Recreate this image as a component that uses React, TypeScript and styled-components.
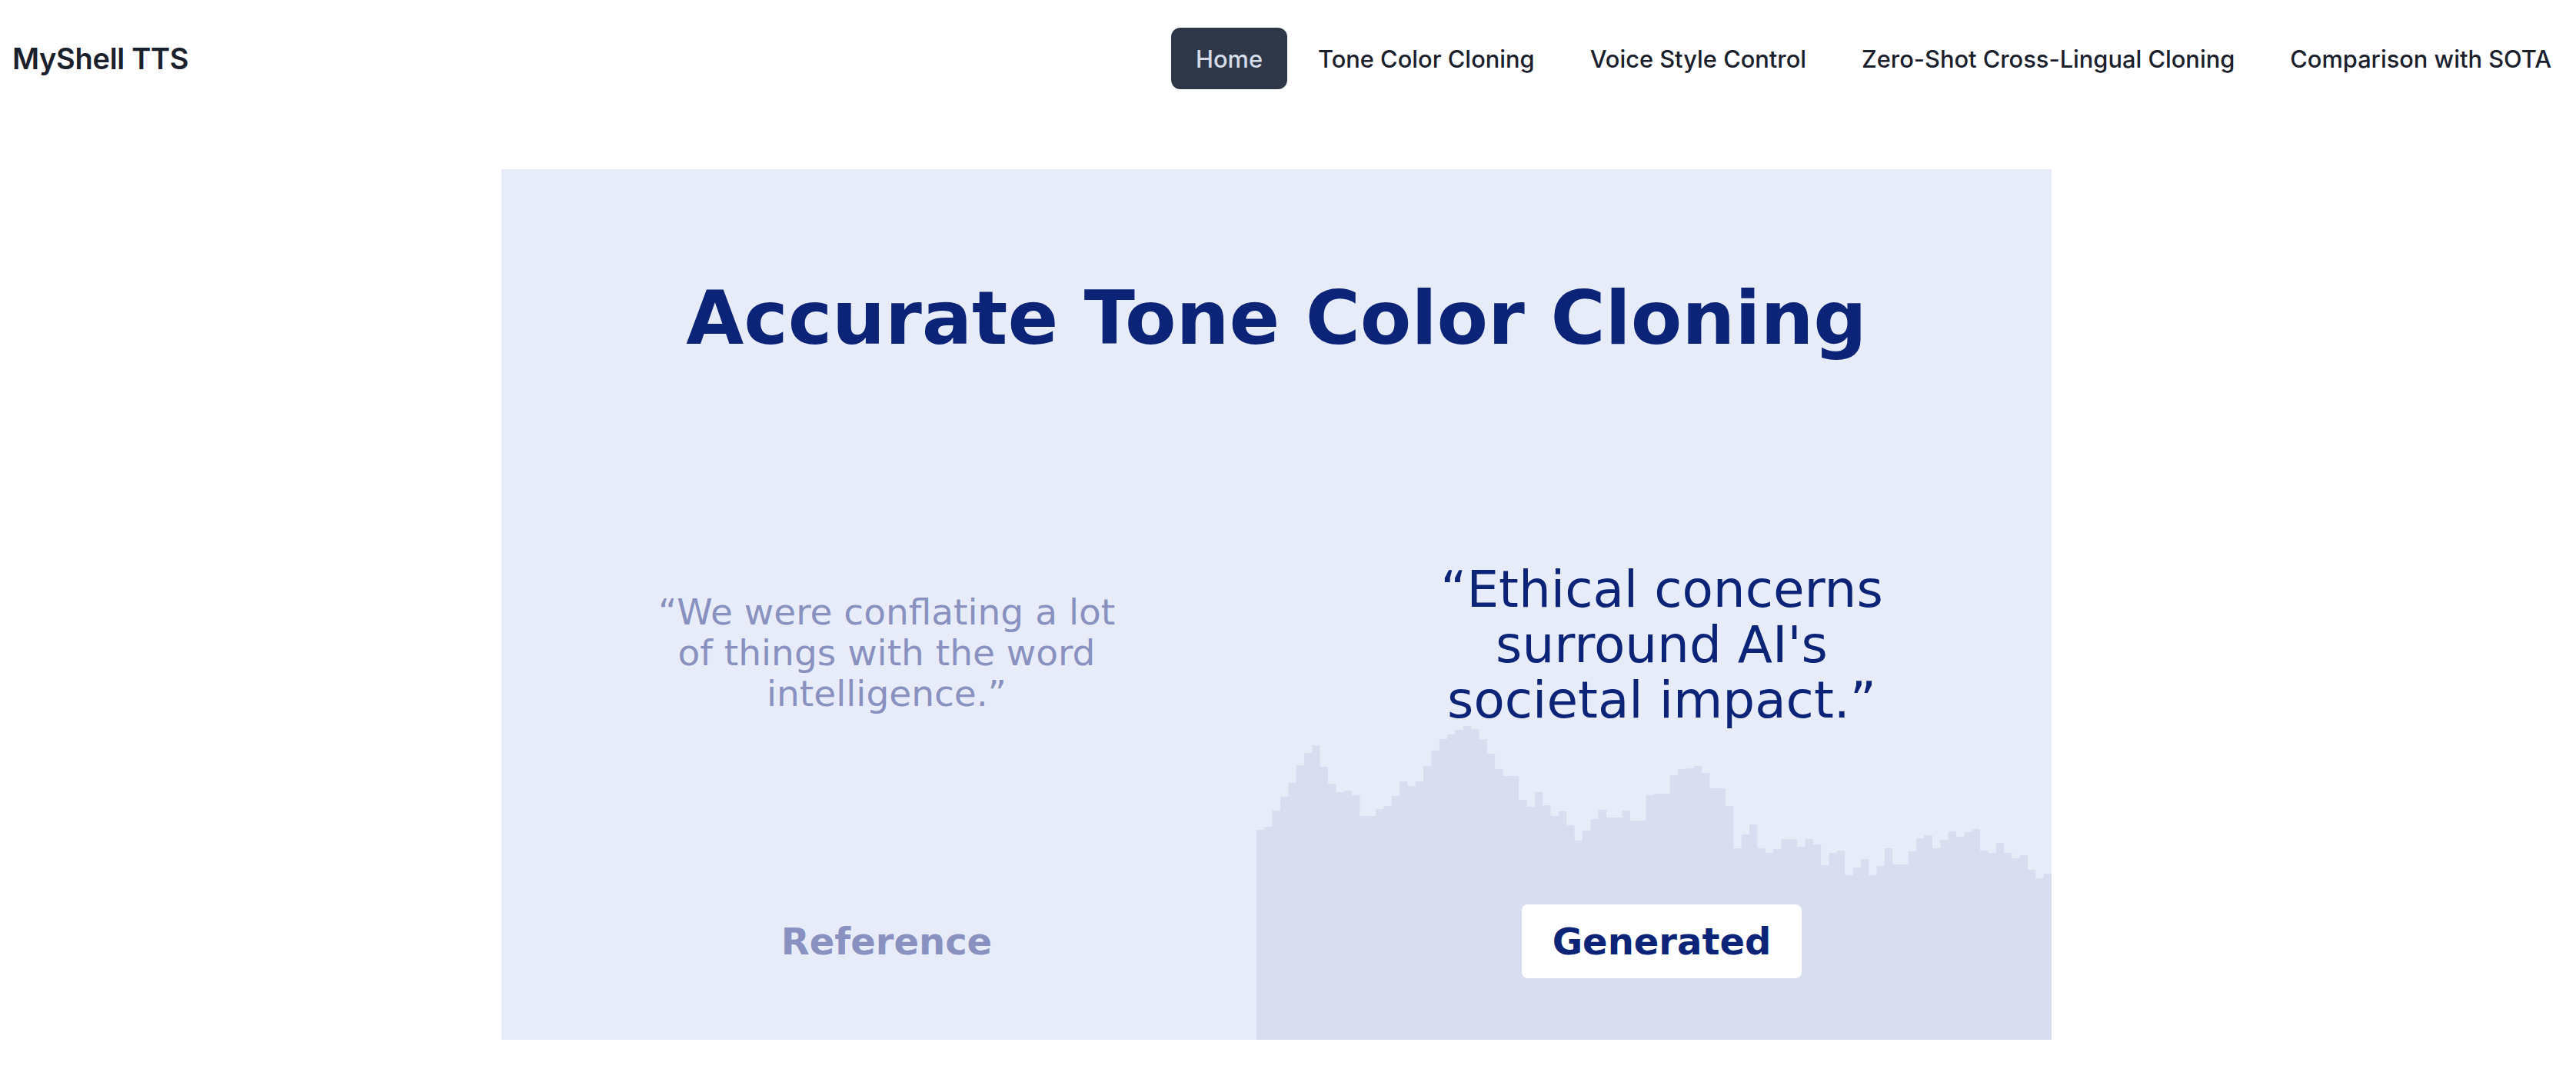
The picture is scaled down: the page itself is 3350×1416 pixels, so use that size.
import React from 'react'
import styled, { createGlobalStyle } from 'styled-components'

const colors = {
  ink: '#1a202c',
  navActive: '#2d3748',
  navActiveText: '#d5dce8',
  panel: '#e8ecf8',
  wave: '#d8def0',
  navy: '#0c2478',
  muted: '#8891bf',
  white: '#ffffff',
}

const GlobalStyle = createGlobalStyle`
  body {
    margin: 0;
    background: ${colors.white};
    font-family: Inter, 'Liberation Sans', sans-serif;
  }
`

const Header = styled.header`
  display: flex;
  justify-content: space-between;
  align-items: center;
  padding: 36px 0 36px 16px;
`

const Brand = styled.div`
  font-family: Inter, 'Liberation Sans', sans-serif;
  font-size: 38px;
  font-weight: 600;
  color: ${colors.ink};
  letter-spacing: -0.3px;
`

const Nav = styled.nav`
  display: flex;
  gap: 8px;
`

const NavItem = styled.a<{ $active?: boolean }>`
  display: flex;
  align-items: center;
  height: 80px;
  padding: 0 32px;
  border-radius: 12px;
  font-family: Inter, 'Liberation Sans', sans-serif;
  font-size: 30.8px;
  font-weight: 500;
  color: ${(props) => (props.$active ? colors.navActiveText : colors.ink)};
  background: ${(props) => (props.$active ? colors.navActive : 'transparent')};
  white-space: nowrap;
  cursor: pointer;
`

const Main = styled.main`
  display: flex;
  justify-content: center;
  padding: 68px 30px 0 0;
`

const Panel = styled.section`
  width: 2016px;
  height: 1132px;
  background: ${colors.panel};
  display: flex;
  flex-direction: column;
  overflow: hidden;
`

const Title = styled.h1`
  margin: 136px 0 0;
  font-family: 'DejaVu Sans', sans-serif;
  font-size: 97px;
  line-height: 116px;
  font-weight: 700;
  letter-spacing: -0.1px;
  color: ${colors.navy};
  text-align: center;
`

const Columns = styled.div`
  flex: 1;
  display: grid;
  grid-template-columns: 982px 1034px;
`

const Column = styled.div`
  position: relative;
  display: flex;
  flex-direction: column;
  align-items: center;
  padding: 0 0 80px 20px;
`

const Quote = styled.p<{ $top: number; $size: number; $lineHeight: number; $color: string }>`
  position: relative;
  z-index: 1;
  flex: 1;
  margin: ${(props) => props.$top}px 0 0;
  font-family: 'DejaVu Sans', sans-serif;
  font-size: ${(props) => props.$size}px;
  line-height: ${(props) => props.$lineHeight}px;
  color: ${(props) => props.$color};
  text-align: center;
`

const Line = styled.span`
  display: block;
`

const Label = styled.div<{ $boxed?: boolean }>`
  position: relative;
  z-index: 1;
  height: 96px;
  display: flex;
  align-items: center;
  padding: 0 40px;
  border-radius: 8px;
  background: ${(props) => (props.$boxed ? colors.white : 'transparent')};
  font-family: 'DejaVu Sans', sans-serif;
  font-size: 48px;
  font-weight: 700;
  color: ${(props) => (props.$boxed ? colors.navy : colors.muted)};
`

const Wave = styled.svg`
  position: absolute;
  left: 0;
  bottom: 0;
  width: 100%;
  height: 412px;
`

// top edge of each bar, measured from the top of the wave area
const waveTops = [
  139, 135, 114, 96, 78, 55, 39, 29, 57, 79, 90, 88, 94, 121, 121, 112, 108, 95, 76, 82,
  76, 56, 36, 21, 15, 9, 4, 8, 21, 40, 60, 69, 69, 100, 109, 90, 107, 121, 115, 133,
  153, 140, 125, 113, 123, 123, 114, 127, 127, 94, 92, 92, 68, 60, 59, 56, 65, 85, 85, 108,
  163, 145, 132, 163, 169, 164, 151, 151, 161, 151, 158, 185, 169, 166, 198, 188, 177, 198, 186, 163,
  184, 184, 167, 150, 146, 163, 152, 141, 148, 142, 138, 166, 169, 156, 169, 176, 172, 191, 202, 196,
]

function WaveForm() {
  const step = 10
  let d = 'M0,412'
  waveTops.forEach((y, i) => {
    d += ` L${i * step},${y} L${(i + 1) * step},${y}`
  })
  d += ` L${waveTops.length * step},412 Z`
  return (
    <Wave viewBox="0 0 1000 412" preserveAspectRatio="none">
      <path d={d} fill={colors.wave} />
    </Wave>
  )
}

const navLinks = [
  'Home',
  'Tone Color Cloning',
  'Voice Style Control',
  'Zero-Shot Cross-Lingual Cloning',
  'Comparison with SOTA',
]

export default function App() {
  return (
    <>
      <GlobalStyle />
      <Header>
        <Brand>MyShell TTS</Brand>
        <Nav>
          {navLinks.map((link, i) => (
            <NavItem key={link} $active={i === 0}>
              {link}
            </NavItem>
          ))}
        </Nav>
      </Header>
      <Main>
        <Panel>
          <Title>Accurate Tone Color Cloning</Title>
          <Columns>
            <Column>
              <Quote $top={297} $size={47} $lineHeight={53} $color={colors.muted}>
                <Line>“We were conflating a lot</Line>
                <Line>of things with the word</Line>
                <Line>intelligence.”</Line>
              </Quote>
              <Label>Reference</Label>
            </Column>
            <Column>
              <WaveForm />
              <Quote $top={259} $size={66} $lineHeight={72} $color={colors.navy}>
                <Line>“Ethical concerns</Line>
                <Line>surround AI's</Line>
                <Line>societal impact.”</Line>
              </Quote>
              <Label $boxed>Generated</Label>
            </Column>
          </Columns>
        </Panel>
      </Main>
    </>
  )
}
